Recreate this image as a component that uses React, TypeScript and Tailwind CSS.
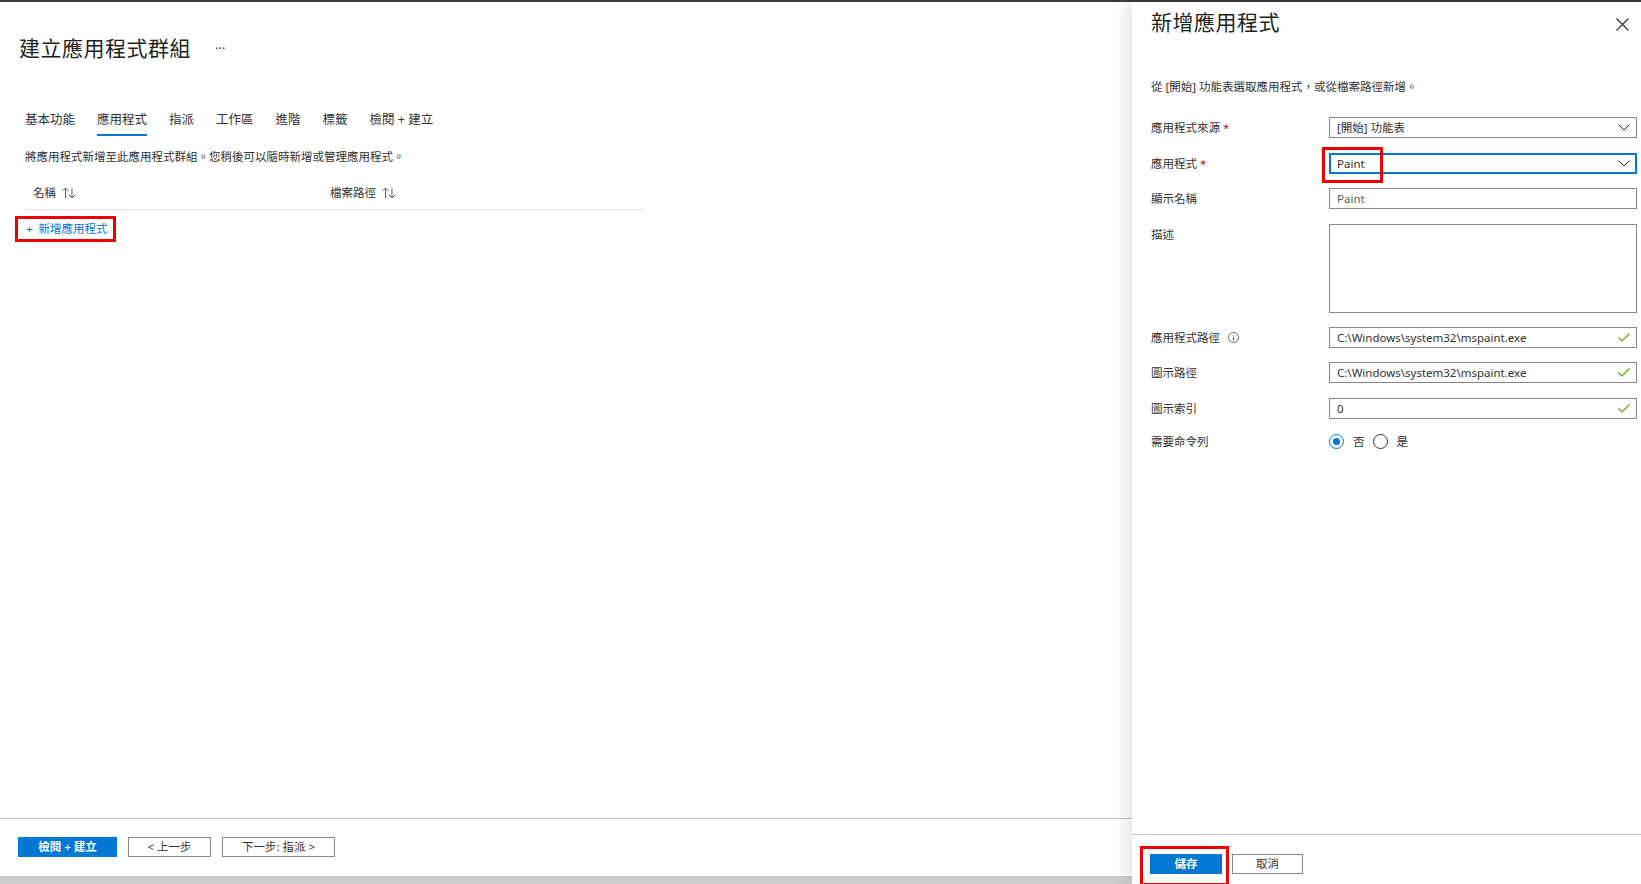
import React from "react";

const FONT = { fontFamily: '"Noto Sans", "Noto Sans CJK TC", sans-serif' };

function Chevron() {
  return (
    <svg width="12" height="7" viewBox="0 0 12 7" className="shrink-0">
      <path d="M0.5 0.5 L6 6 L11.5 0.5" fill="none" stroke="#323130" strokeWidth="1" />
    </svg>
  );
}

function Check() {
  return (
    <svg width="12" height="9" viewBox="0 0 12 9" className="shrink-0">
      <path d="M0.5 4.5 L4 8 L11.5 0.5" fill="none" stroke="#57a300" strokeWidth="1.1" />
    </svg>
  );
}

function SortIcon() {
  return (
    <svg width="14" height="12" viewBox="0 0 14 12" className="ml-[6px]">
      <path d="M3.5 11 V1 M0.5 4 L3.5 1 L6.5 4" fill="none" stroke="#605e5c" strokeWidth="1" />
      <path d="M10 1 V11 M7 8 L10 11 L13 8" fill="none" stroke="#605e5c" strokeWidth="1" />
    </svg>
  );
}

function Label({ text, req, info }: { text: string; req?: boolean; info?: boolean }) {
  return (
    <div className="w-[178px] shrink-0 h-[21px] flex items-center text-[11.5px] text-[#323130]">
      <span>{text}</span>
      {req && <span className="ml-[3px] text-[#a4262c]">*</span>}
      {info && (
        <svg width="11" height="11" viewBox="0 0 11 11" className="ml-[8px]">
          <circle cx="5.5" cy="5.5" r="5" fill="none" stroke="#605e5c" strokeWidth="0.9" />
          <path d="M5.5 4.6 V8.4" stroke="#605e5c" strokeWidth="1" />
          <circle cx="5.5" cy="3" r="0.6" fill="#605e5c" />
        </svg>
      )}
    </div>
  );
}

function Field({
  value,
  kind,
  focused,
}: {
  value: string;
  kind: "select" | "check" | "plain";
  focused?: boolean;
}) {
  return (
    <div
      className={
        "w-[308px] h-[21px] flex items-center justify-between text-[11.5px] text-[#323130] " +
        (focused ? "border-2 border-[#0078d4] pl-[6px] pr-[5px]" : "border border-[#8a8886] pl-[7px] pr-[6px]")
      }
    >
      <span className={kind === "plain" ? "text-[#605e5c]" : ""}>{value}</span>
      {kind === "select" && <Chevron />}
      {kind === "check" && <Check />}
    </div>
  );
}

export default function App() {
  const tabs = ["基本功能", "應用程式", "指派", "工作區", "進階", "標籤", "檢閱 + 建立"];
  return (
    <div className="w-[1641px] h-[884px] bg-white overflow-hidden flex flex-col" style={FONT}>
      <div className="h-[2px] bg-[#3b3b3b] shrink-0" />
      <div className="flex flex-1 min-h-0">
        {/* Left main area */}
        <div className="w-[1132px] shrink-0 flex flex-col">
          <div className="flex-1 pl-[19px]">
            <div className="mt-[32px] flex items-center h-[28px]">
              <h1 className="text-[21px] leading-[28px] text-[#201f1e] tracking-[0.5px]">建立應用程式群組</h1>
              <span className="ml-[24px] text-[13px] text-[#323130] leading-none">···</span>
            </div>
            <div className="mt-[49px] flex pl-[6px] gap-[22px]">
              {tabs.map((t) => (
                <div key={t} className="flex flex-col items-center">
                  <span className="text-[12.5px] leading-[18px] text-[#323130]">{t}</span>
                  <div className={"mt-[5px] h-[2px] w-full " + (t === "應用程式" ? "bg-[#0078d4]" : "bg-transparent")} />
                </div>
              ))}
            </div>
            <p className="mt-[13px] pl-[6px] text-[11.5px] leading-[16px] text-[#323130]">
              將應用程式新增至此應用程式群組。您稍後可以隨時新增或管理應用程式。
            </p>
            <div className="mt-[12px] ml-[6px] w-[620px] h-[33px] border-b border-[#e5e5e5] flex items-start pt-[8px] text-[11.5px] text-[#323130]">
              <div className="w-[305px] pl-[8px] flex items-center h-[16px]">
                <span>名稱</span>
                <SortIcon />
              </div>
              <div className="flex items-center h-[16px]">
                <span>檔案路徑</span>
                <SortIcon />
              </div>
            </div>
            <div className="mt-[6px] -ml-[4px] w-[101px] h-[26px] border-[3px] border-[#ee0000] flex items-center pl-[8px] text-[11.5px] text-[#0078d4]">
              <span className="mr-[6px]">+</span>
              <span>新增應用程式</span>
            </div>
          </div>
          <div className="h-[58px] border-t border-[#c8c6c4] flex items-start pt-[18px] pl-[18px] gap-[11px] shrink-0">
            <button className="w-[99px] h-[20px] bg-[#0078d4] text-white text-[11.5px] font-semibold flex items-center justify-center">
              檢閱 + 建立
            </button>
            <button className="w-[83px] h-[20px] border border-[#8a8886] text-[#323130] text-[11.5px] flex items-center justify-center">
              &lt; 上一步
            </button>
            <button className="w-[113px] h-[20px] border border-[#8a8886] text-[#323130] text-[11.5px] flex items-center justify-center">
              下一步: 指派 &gt;
            </button>
          </div>
          <div className="h-[8px] bg-[#cdcdcd] shrink-0" />
        </div>

        {/* Right panel */}
        <div className="flex-1 flex flex-col bg-white shadow-[-6px_0_14px_rgba(0,0,0,0.10)] relative z-10">
          <div className="flex-1 pl-[19px]">
            <div className="flex items-start justify-between h-[36px] pr-[12px]">
              <h2 className="mt-[6px] text-[21px] leading-[28px] text-[#201f1e] tracking-[0.5px]">新增應用程式</h2>
              <svg width="13" height="13" viewBox="0 0 13 13" className="mt-[16px]">
                <path d="M0.5 0.5 L12.5 12.5 M12.5 0.5 L0.5 12.5" stroke="#323130" strokeWidth="1.1" />
              </svg>
            </div>
            <p className="mt-[41px] text-[11.5px] leading-[16px] text-[#323130]">
              從 [開始] 功能表選取應用程式，或從檔案路徑新增。
            </p>
            <div className="mt-[22px] flex flex-col">
              <div className="flex items-start">
                <Label text="應用程式來源" req />
                <Field value="[開始] 功能表" kind="select" />
              </div>
              <div className="flex items-start mt-[15px] relative">
                <Label text="應用程式" req />
                <Field value="Paint" kind="select" focused />
                <div className="absolute left-[171px] top-[-6px] w-[61px] h-[36px] border-[3px] border-[#ee0000]" />
              </div>
              <div className="flex items-start mt-[14px]">
                <Label text="顯示名稱" />
                <Field value="Paint" kind="plain" />
              </div>
              <div className="flex items-start mt-[15px]">
                <Label text="描述" />
                <div className="w-[308px] h-[89px] border border-[#8a8886]" />
              </div>
              <div className="flex items-start mt-[14px]">
                <Label text="應用程式路徑" info />
                <Field value="C:\Windows\system32\mspaint.exe" kind="check" />
              </div>
              <div className="flex items-start mt-[14px]">
                <Label text="圖示路徑" />
                <Field value="C:\Windows\system32\mspaint.exe" kind="check" />
              </div>
              <div className="flex items-start mt-[15px]">
                <Label text="圖示索引" />
                <Field value="0" kind="check" />
              </div>
              <div className="flex items-center mt-[12px]">
                <Label text="需要命令列" />
                <div className="flex items-center text-[11.5px] text-[#323130]">
                  <span className="w-[15px] h-[15px] rounded-full border border-[#0078d4] flex items-center justify-center">
                    <span className="w-[7px] h-[7px] rounded-full bg-[#0078d4]" />
                  </span>
                  <span className="ml-[9px]">否</span>
                  <span className="ml-[8px] w-[15px] h-[15px] rounded-full border border-[#323130]" />
                  <span className="ml-[9px]">是</span>
                </div>
              </div>
            </div>
          </div>
          <div className="h-[50px] border-t border-[#c8c6c4] flex items-start pt-[19px] pl-[18px] gap-[10px] shrink-0">
            <div className="relative">
              <button className="w-[72px] h-[20px] bg-[#0078d4] text-white text-[11.5px] font-semibold flex items-center justify-center">
                儲存
              </button>
              <div className="absolute left-[-10px] top-[-8px] w-[89px] h-[40px] border-[3px] border-[#ee0000]" />
            </div>
            <button className="w-[71px] h-[20px] border border-[#8a8886] text-[#323130] text-[11.5px] flex items-center justify-center">
              取消
            </button>
          </div>
        </div>
      </div>
    </div>
  );
}
